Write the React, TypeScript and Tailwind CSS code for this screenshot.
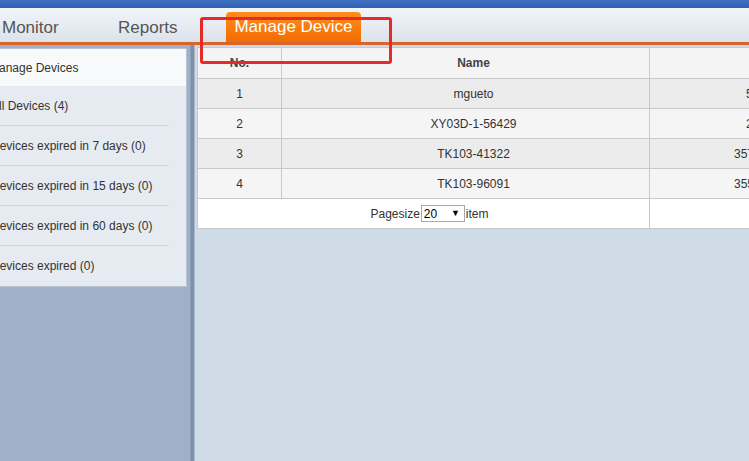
import React from "react";

const rows = [
  { no: "1", name: "mgueto", imei: "5", pad: "pl-[96px]", bg: "bg-[#ececec]" },
  { no: "2", name: "XY03D-1-56429", imei: "2", pad: "pl-[96px]", bg: "bg-[#f5f5f5]" },
  { no: "3", name: "TK103-41322", imei: "357", pad: "pl-[84px]", bg: "bg-[#ececec]" },
  { no: "4", name: "TK103-96091", imei: "355", pad: "pl-[84px]", bg: "bg-[#f5f5f5]" },
];

const menu = [
  "All Devices (4)",
  "Devices expired in 7 days (0)",
  "Devices expired in 15 days (0)",
  "Devices expired in 60 days (0)",
  "Devices expired (0)",
];

export default function App() {
  return (
    <div
      className="relative w-[749px] h-[461px] overflow-hidden flex flex-col"
      style={{ fontFamily: '"Liberation Sans", Arial, sans-serif' }}
    >
      {/* top blue strip */}
      <div className="h-[8px] bg-gradient-to-b from-[#3f71c2] to-[#2f60b2] shrink-0" />
      {/* nav */}
      <div className="h-[34px] shrink-0 flex items-end bg-gradient-to-b from-[#f2f6fb] to-[#dce2ea] text-[17px]">
        <div className="h-[30px] flex items-center pl-[2px] pt-[1px] w-[118px] text-[#555]">Monitor</div>
        <div className="h-[30px] flex items-center pt-[1px] w-[106px] text-[#555]">Reports</div>
        <div className="h-[30px] w-[135px] ml-[2px] rounded-t-[4px] bg-gradient-to-b from-[#ff8d1c] to-[#f26c00] text-white flex items-center justify-center">
          Manage Device
        </div>
      </div>
      <div className="h-[3px] shrink-0 bg-[#d9652a]" />
      {/* body */}
      <div className="flex-1 flex min-h-0">
        <div className="w-[190px] shrink-0 bg-[#9fb0c8] pt-[3px]">
          <div className="ml-[-12px] w-[199px] border border-[#b9c4d2] bg-[#e6ebf1] text-[12px] text-[#333]">
            <div className="h-[37px] bg-[#f8f9fb] flex items-center pl-0 overflow-hidden">
              <span className="ml-0">Manage Devices</span>
            </div>
            {menu.map((m, i) => (
              <div key={i} className="pr-[17px]">
                <div
                  className={
                    "h-[40px] flex items-center pl-[2px] " +
                    (i < menu.length - 1 ? "border-b border-[#cfd5dd]" : "")
                  }
                >
                  {m}
                </div>
              </div>
            ))}
          </div>
        </div>
        <div className="w-[1px] shrink-0 bg-[#8c9db7]" />
        <div className="w-[3px] shrink-0 bg-[#7f90aa]" />
        <div className="w-[1px] shrink-0 bg-[#aab8cc]" />
        <div className="flex-1 min-w-0 bg-[#cfdbe7] pt-[2px] pl-[2px] overflow-hidden">
          <table className="border-collapse w-[620px] text-[12px] text-[#333] table-fixed">
            <colgroup>
              <col className="w-[84px]" />
              <col className="w-[368px]" />
              <col />
            </colgroup>
            <thead>
              <tr className="h-[31px] bg-[#f4f4f4]">
                <th className="border border-[#c9c9c9] font-bold text-[#444]">No.</th>
                <th className="border border-[#c9c9c9] font-bold text-[#444] pl-[16px]">Name</th>
                <th className="border border-[#c9c9c9]"></th>
              </tr>
            </thead>
            <tbody>
              {rows.map((r) => (
                <tr key={r.no} className={"h-[30px] " + r.bg}>
                  <td className="border border-[#c9c9c9] text-center">{r.no}</td>
                  <td className="border border-[#c9c9c9] text-center pl-[16px]">{r.name}</td>
                  <td className={"border border-[#c9c9c9] text-left whitespace-nowrap " + r.pad}>
                    {r.imei}
                  </td>
                </tr>
              ))}
              <tr className="h-[30px] bg-white">
                <td colSpan={2} className="border border-[#c9c9c9]">
                  <div className="flex items-center justify-center pl-[12px]">
                    <span>Pagesize</span>
                    <span className="ml-[1px] h-[17px] w-[44px] border border-[#a9a9a9] bg-white flex items-center justify-between px-[2px] text-[12px] text-black">
                      <span>20</span>
                      <span className="text-[9px] mr-[2px]">▼</span>
                    </span>
                    <span className="ml-[1px]">item</span>
                  </div>
                </td>
                <td className="border border-[#c9c9c9]"></td>
              </tr>
            </tbody>
          </table>
        </div>
      </div>
      {/* red annotation box */}
      <div className="absolute left-[200px] top-[17px] w-[192px] h-[47px] border-[3px] border-[#e62a2a] rounded-[3px] pointer-events-none" />
    </div>
  );
}
